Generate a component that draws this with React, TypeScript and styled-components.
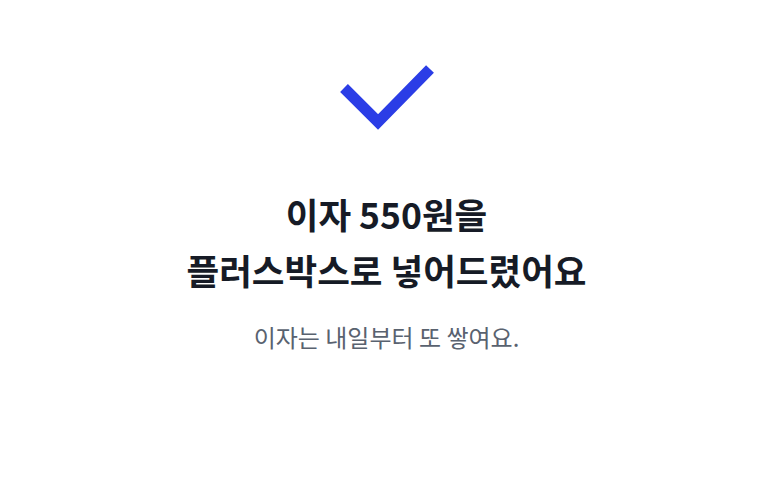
import styled, { createGlobalStyle } from "styled-components";

const GlobalStyle = createGlobalStyle`
  html, body {
    margin: 0;
    padding: 0;
    background: #ffffff;
  }
  body {
    font-family: "Noto Sans CJK KR", "Noto Sans", sans-serif;
  }
`;

const Page = styled.main`
  display: flex;
  flex-direction: column;
  align-items: center;
  padding-top: 62px;
  min-height: 498px;
  box-sizing: border-box;
`;

const CheckIcon = styled.svg`
  display: block;
  width: 100px;
  height: 70px;
`;

const Title = styled.h1`
  margin: 54px 0 0;
  font-size: 35.5px;
  line-height: 56px;
  font-weight: 700;
  color: #161b26;
  text-align: center;
  letter-spacing: 0;
`;

const Description = styled.p`
  margin: 23px 0 0;
  font-size: 24px;
  line-height: 32px;
  font-weight: 400;
  color: #59626f;
  text-align: center;
`;

const App = () => {
  return (
    <>
      <GlobalStyle />
      <Page>
        <CheckIcon viewBox="0 0 100 70" aria-hidden="true">
          <path
            d="M7 26 L41 60 L93 7"
            fill="none"
            stroke="#2b3de6"
            strokeWidth={11}
            strokeLinecap="butt"
            strokeLinejoin="miter"
          />
        </CheckIcon>
        <Title>
          이자 550원을
          <br />
          플러스박스로 넣어드렸어요
        </Title>
        <Description>이자는 내일부터 또 쌓여요.</Description>
      </Page>
    </>
  );
};

export default App;
